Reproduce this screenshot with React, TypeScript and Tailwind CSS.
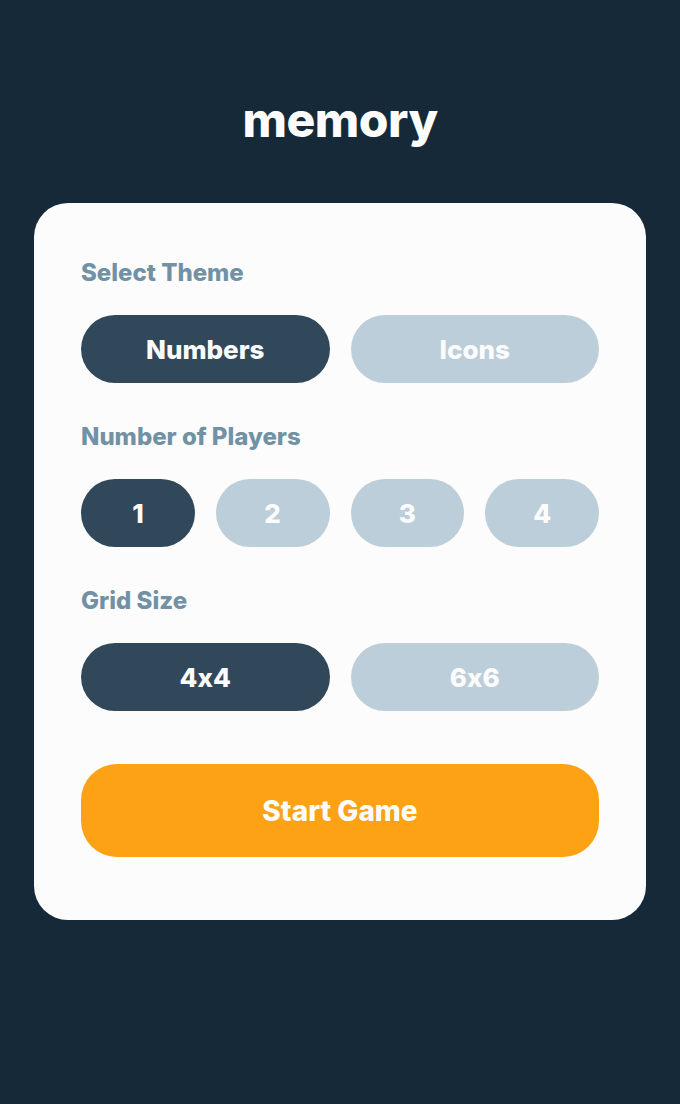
import React, { useState } from 'react';

const font = { fontFamily: 'Inter, "Liberation Sans", sans-serif', fontFeatureSettings: '"calt" 0' };

interface PillProps {
  label: string;
  active: boolean;
  onClick: () => void;
}

const Pill: React.FC<PillProps> = ({ label, active, onClick }) => (
  <button
    onClick={onClick}
    className={`h-[68px] flex-1 rounded-full text-[26px] font-extrabold text-[#FCFCFC] ${
      active ? 'bg-[#304859]' : 'bg-[#BCCED9]'
    }`}
  >
    {label}
  </button>
);

const App: React.FC = () => {
  const [theme, setTheme] = useState('Numbers');
  const [players, setPlayers] = useState('1');
  const [grid, setGrid] = useState('4x4');

  return (
    <div style={font} className="min-h-[1104px] w-full bg-[#152938] pt-[96px]">
      <h1 className="text-center text-[48px] leading-[48px] font-extrabold tracking-[-0.5px] text-[#FCFCFC]">memory</h1>

      <div className="mx-[34px] mt-[59px] rounded-[34px] bg-[#FCFCFC] px-[47px] pt-[58px] pb-[63px]">
        <p className="text-[24px] leading-[24px] font-extrabold text-[#7191A5]">Select Theme</p>
        <div className="mt-[30px] flex gap-[21px]">
          {['Numbers', 'Icons'].map((t) => (
            <Pill key={t} label={t} active={theme === t} onClick={() => setTheme(t)} />
          ))}
        </div>

        <p className="mt-[42px] text-[24px] leading-[24px] font-extrabold text-[#7191A5]">Number of Players</p>
        <div className="mt-[30px] flex gap-[21px]">
          {['1', '2', '3', '4'].map((p) => (
            <Pill key={p} label={p} active={players === p} onClick={() => setPlayers(p)} />
          ))}
        </div>

        <p className="mt-[42px] text-[24px] leading-[24px] font-extrabold text-[#7191A5]">Grid Size</p>
        <div className="mt-[30px] flex gap-[21px]">
          {['4x4', '6x6'].map((g) => (
            <Pill key={g} label={g} active={grid === g} onClick={() => setGrid(g)} />
          ))}
        </div>

        <button className="mt-[53px] h-[93px] w-full rounded-[36px] bg-[#FDA214] text-[28px] font-extrabold text-[#FCFCFC]">
          Start Game
        </button>
      </div>
    </div>
  );
};

export default App;
